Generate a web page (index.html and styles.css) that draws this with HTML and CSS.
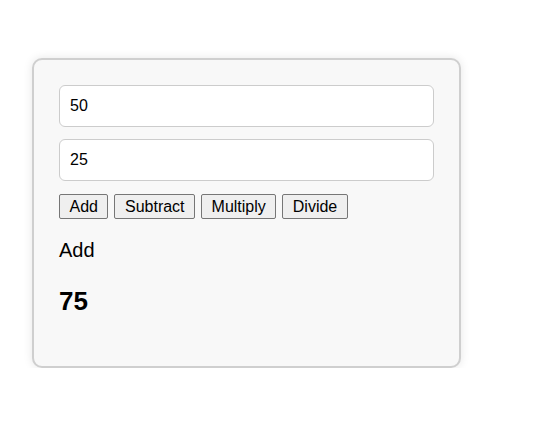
FILE: index.html
```html
<!DOCTYPE html>
<html>
<head>
<meta charset="utf-8">
<link rel="stylesheet" href="styles.css">
</head>
<body>
<div class="calc">
  <input class="num" type="text" value="50">
  <input class="num" type="text" value="25">
  <div class="ops">
    <button class="op">Add</button>
    <button class="op">Subtract</button>
    <button class="op">Multiply</button>
    <button class="op">Divide</button>
  </div>
  <div class="op-name">Add</div>
  <div class="result">75</div>
</div>
</body>
</html>
```
FILE: styles.css
```css
html, body {
  margin: 0;
  padding: 0;
  background: #fff;
}
body {
  font-family: "Liberation Sans", Arial, sans-serif;
  padding: 58px 0 0 32px;
}
.calc {
  box-sizing: border-box;
  width: 429px;
  height: 310px;
  border: 2px solid #cfcfcf;
  border-radius: 10px;
  background: #f8f8f8;
  box-shadow: 0 0 10px rgba(0, 0, 0, 0.1);
  padding: 25px 25px;
  display: flex;
  flex-direction: column;
}
.num {
  box-sizing: border-box;
  height: 42px;
  width: 375px;
  margin: 0 0 12px 0;
  padding: 0 10px;
  border: 1px solid #cccccc;
  border-radius: 6px;
  background: #fff;
  font-family: "Liberation Sans", Arial, sans-serif;
  font-size: 16px;
  color: #000;
  outline: none;
}
.ops {
  display: flex;
  gap: 6px;
  margin-top: 1px;
}
.op {
  box-sizing: border-box;
  height: 25px;
  padding: 0 9.5px;
  font-family: "Liberation Sans", Arial, sans-serif;
  font-size: 16px;
  color: #000;
  background: #efefef;
  border: 1px solid #767676;
  border-radius: 2px;
}
.op-name {
  font-size: 20px;
  margin-top: 20px;
  line-height: 23px;
}
.result {
  font-size: 26px;
  font-weight: bold;
  line-height: 30px;
  margin-top: 24px;
}
```
